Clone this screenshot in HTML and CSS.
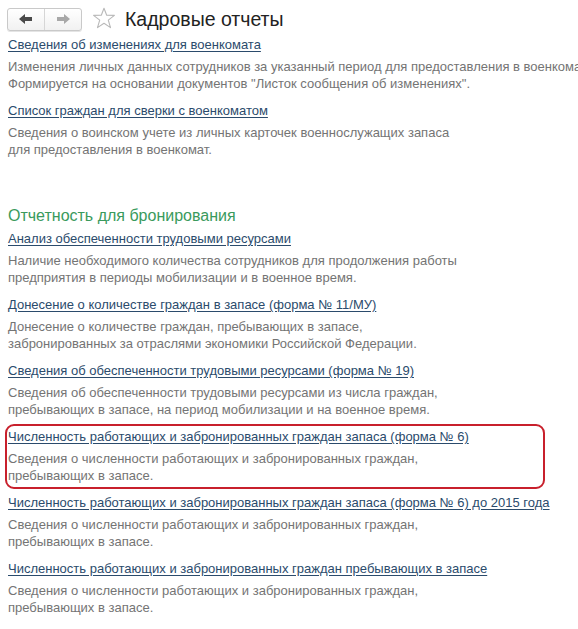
FILE: index.html
```html
<!DOCTYPE html>
<html lang="ru">
<head>
<meta charset="utf-8">
<title>Кадровые отчеты</title>
<link rel="stylesheet" href="styles.css">
</head>
<body>
<div class="page">
  <header class="top">
    <div class="nav">
      <span class="nav-btn">
        <svg width="16" height="12" viewBox="0 0 16 12"><path d="M1 6 L7 1 L7 4 L14 4 L14 8 L7 8 L7 11 Z" fill="#4a4a4a"/></svg>
      </span>
      <span class="nav-btn">
        <svg width="16" height="12" viewBox="0 0 16 12"><path d="M15 6 L9 1 L9 4 L2 4 L2 8 L9 8 L9 11 Z" fill="#a8a8a8"/></svg>
      </span>
    </div>
    <svg class="star" width="24" height="22" viewBox="0 0 24 22"><path d="M12 1.2 L14.7 8.2 L22.4 8.4 L16.3 13.1 L18.5 20.6 L12 16.2 L5.5 20.6 L7.7 13.1 L1.6 8.4 L9.3 8.2 Z" fill="none" stroke="#b9b9b9" stroke-width="1.1" stroke-linejoin="round"/></svg>
    <h1 class="title">Кадровые отчеты</h1>
  </header>

  <main class="content">
    <section class="item">
      <a class="link" href="#">Сведения об изменениях для военкомата</a>
      <p class="desc">Изменения личных данных сотрудников за указанный период для предоставления в военкомат.<br>Формируется на основании документов "Листок сообщения об изменениях".</p>
    </section>
    <section class="item">
      <a class="link" href="#">Список граждан для сверки с военкоматом</a>
      <p class="desc">Сведения о воинском учете из личных карточек военнослужащих запаса<br>для предоставления в военкомат.</p>
    </section>

    <h2 class="group">Отчетность для бронирования</h2>

    <section class="item">
      <a class="link" href="#">Анализ обеспеченности трудовыми ресурсами</a>
      <p class="desc">Наличие необходимого количества сотрудников для продолжения работы<br>предприятия в периоды мобилизации и в военное время.</p>
    </section>
    <section class="item">
      <a class="link" href="#">Донесение о количестве граждан в запасе (форма № 11/МУ)</a>
      <p class="desc">Донесение о количестве граждан, пребывающих в запасе,<br>забронированных за отраслями экономики Российской Федерации.</p>
    </section>
    <section class="item">
      <a class="link" href="#">Сведения об обеспеченности трудовыми ресурсами (форма № 19)</a>
      <p class="desc">Сведения об обеспеченности трудовыми ресурсами из числа граждан,<br>пребывающих в запасе, на период мобилизации и на военное время.</p>
    </section>
    <section class="item marked">
      <a class="link" href="#">Численность работающих и забронированных граждан запаса (форма № 6)</a>
      <p class="desc">Сведения о численности работающих и забронированных граждан,<br>пребывающих в запасе.</p>
    </section>
    <section class="item">
      <a class="link" href="#">Численность работающих и забронированных граждан запаса (форма № 6) до 2015 года</a>
      <p class="desc">Сведения о численности работающих и забронированных граждан,<br>пребывающих в запасе.</p>
    </section>
    <section class="item">
      <a class="link" href="#">Численность работающих и забронированных граждан пребывающих в запасе</a>
      <p class="desc">Сведения о численности работающих и забронированных граждан,<br>пребывающих в запасе.</p>
    </section>
  </main>
</div>
</body>
</html>
```

FILE: styles.css
```css
html, body {
  margin: 0;
  padding: 0;
  background: #ffffff;
  overflow: hidden;
}

.page {
  font-family: "Liberation Sans", Arial, sans-serif;
  font-size: 13px;
  color: #6e6e6e;
}

.top {
  display: flex;
  align-items: center;
  height: 24px;
  padding: 7px 0 0 7px;
}

.nav {
  display: flex;
  height: 21px;
  border: 1px solid #c9c9c9;
  border-radius: 3px;
  background: linear-gradient(#ffffff, #f1f1f1);
  box-shadow: 0 1px 0 #e4e4e4;
}

.nav-btn {
  display: flex;
  align-items: center;
  justify-content: center;
  width: 36px;
}

.nav-btn + .nav-btn {
  border-left: 1px solid #d6d6d6;
}

.star {
  margin-left: 10px;
  margin-top: -2px;
}

.title {
  margin: 0 0 0 9px;
  font-size: 19.5px;
  font-weight: normal;
  color: #222222;
  line-height: 24px;
}

.content {
  padding: 5px 0 0 8px;
  white-space: nowrap;
}

.item {
  position: relative;
  margin: 0 0 10px 0;
}

.link {
  display: block;
  width: max-content;
  line-height: 17px;
  color: #2b4b6c;
  text-decoration: underline;
  text-underline-offset: 2px;
}

.desc {
  margin: 5px 0 0 0;
  line-height: 17px;
  color: #747474;
}

.group {
  margin: 48px 0 4px 0;
  font-size: 16px;
  font-weight: normal;
  line-height: 20px;
  color: #3a9a5c;
}

.marked::after {
  content: "";
  position: absolute;
  left: -3px;
  top: -4px;
  width: 536px;
  height: 61px;
  border: 2px solid #c8202c;
  border-radius: 9px;
  pointer-events: none;
}
```
